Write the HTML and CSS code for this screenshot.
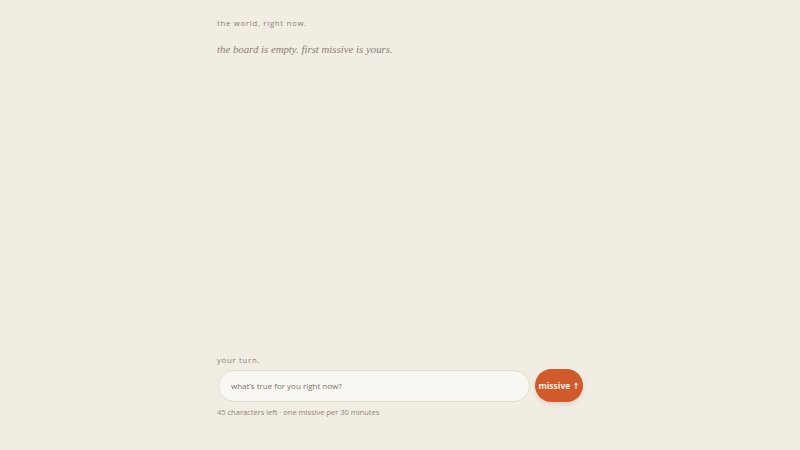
FILE: index.html
```html
<!DOCTYPE html>
<html>
<head>
<meta charset="utf-8">
<link rel="stylesheet" href="styles.css">
</head>
<body>
<main class="page">
  <section class="board">
    <div class="label">the world, right now.</div>
    <p class="empty">the board is empty. first missive is yours.</p>
  </section>
  <section class="compose">
    <div class="label">your turn.</div>
    <form class="row">
      <input class="field" type="text" placeholder="what’s true for you right now?">
      <button class="send" type="button">missive <span class="arrow">↑</span></button>
    </form>
    <div class="hint">45 characters left · one missive per 30 minutes</div>
  </section>
</main>
</body>
</html>
```
FILE: styles.css
```css
html, body {
  margin: 0;
  padding: 0;
  background: #f1ede3;
  height: 100%;
}
.page {
  width: 366px;
  margin: 0 auto;
  height: 450px;
  box-sizing: border-box;
  padding: 18px 0 33px 0;
  display: flex;
  flex-direction: column;
  justify-content: space-between;
  font-family: "Open Sans", "Noto Sans", sans-serif;
  color: #857b70;
}
.label {
  font-size: 7.8px;
  letter-spacing: 0.7px;
  color: #8a8075;
  line-height: 11px;
}
.empty {
  margin: 13px 0 0 0;
  font-family: "Liberation Serif", serif;
  font-style: italic;
  font-size: 10.8px;
  color: #8a7f74;
  line-height: 14px;
}
.row {
  margin: 3px 0 0 0;
  display: flex;
  align-items: center;
  gap: 5px;
}
.field {
  flex: 1;
  height: 32px;
  box-sizing: border-box;
  margin-left: 1px;
  border: 1px solid #e2dcd0;
  border-radius: 16px;
  background: #f9f7f2;
  padding: 0 12px;
  font-family: "Open Sans", "Noto Sans", sans-serif;
  font-size: 8px;
  color: #6f665d;
  outline: none;
}
.field::placeholder {
  color: #7a7066;
}
.send {
  width: 48px;
  height: 33px;
  border: none;
  border-radius: 17px;
  background: #cf5a2b;
  color: #fbeee6;
  font-family: "Open Sans", "Noto Sans", sans-serif;
  font-weight: 700;
  font-size: 8.5px;
  padding: 0;
  box-shadow: 0 2px 4px rgba(160, 70, 30, 0.18);
  white-space: nowrap;
}
.arrow {
  font-weight: 700;
  font-family: "DejaVu Sans", sans-serif;
}
.hint {
  margin-top: 5px;
  font-size: 7.5px;
  color: #8f857a;
  line-height: 10px;
}
```
